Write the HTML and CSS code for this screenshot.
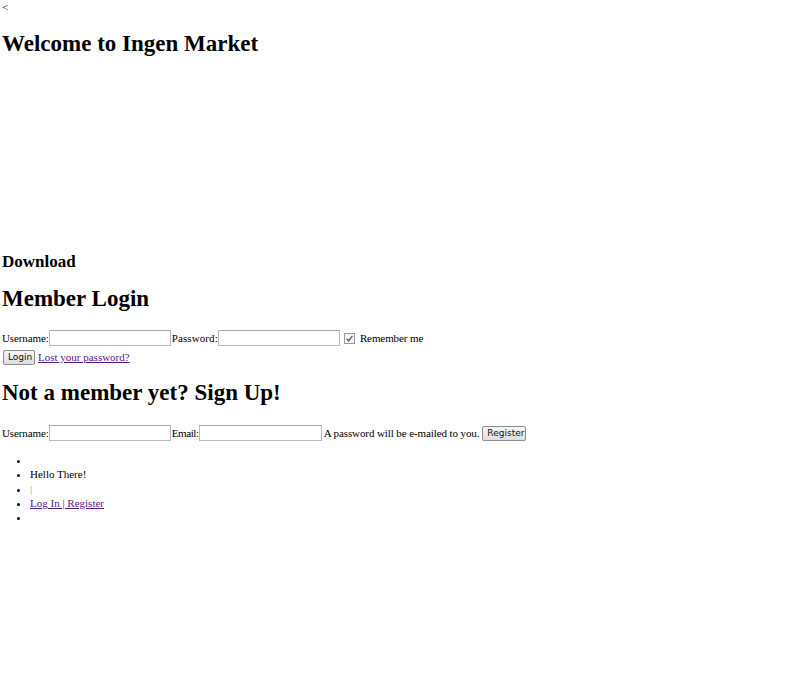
FILE: index.html
```html
<!DOCTYPE html>
<html>
<head>
<meta charset="utf-8">
<title>Ingen Market</title>
<link rel="stylesheet" href="styles.css">
</head>
<body>
<div class="back">&lt;</div>
<h1 class="title">Welcome to Ingen Market</h1>
<div class="banner"></div>
<h3 class="download">Download</h3>
<h2 class="section">Member Login</h2>
<form class="login">
  <div class="row row-first">
    <label class="lbl">Username:</label><input class="field" type="text"><label class="lbl lbl-pass">Password:</label><input class="field" type="password"><span class="check"><svg width="11" height="11" viewBox="0 0 11 11"><rect x="0.5" y="0.5" width="10" height="10" fill="#f4f4f4" stroke="#9a9a9a"/><path d="M2.6 5.6 L4.6 7.8 L8.4 2.8" fill="none" stroke="#4a5f86" stroke-width="1.4"/></svg></span><span class="lbl">Remember me</span>
  </div>
  <div class="row row-second">
    <button class="btn btn-login" type="button">Login</button><a class="link" href="#">Lost your password?</a>
  </div>
</form>
<h2 class="section section-signup">Not a member yet? Sign Up!</h2>
<form class="signup">
  <div class="row row-signup">
    <label class="lbl">Username:</label><input class="field" type="text"><label class="lbl lbl-email">Email:</label><input class="field field-email" type="text"><span class="lbl note">A password will be e-mailed to you.</span><button class="btn btn-register" type="button">Register</button>
  </div>
</form>
<ul class="menu">
  <li></li>
  <li>Hello There!</li>
  <li><span class="sep">|</span></li>
  <li><a class="link" href="#">Log In | Register</a></li>
  <li></li>
</ul>
</body>
</html>
```
FILE: styles.css
```css
html, body {
  background: #fff;
}
body {
  margin: 0;
  padding: 0 0 0 2px;
  font-family: "Liberation Serif", "Times New Roman", serif;
  font-size: 11px;
  line-height: 14px;
  color: #000;
}
.back {
  height: 14px;
  line-height: 14px;
}
.title {
  font-size: 23px;
  line-height: 30px;
  font-weight: bold;
  margin: 15px 0 14px;
}
.banner {
  height: 165px;
}
.download {
  font-size: 17px;
  line-height: 20px;
  font-weight: bold;
  margin: 14px 0 12px;
}
.section {
  font-size: 23px;
  line-height: 30px;
  font-weight: bold;
  margin: 12px 0 15px;
}
.section-signup {
  margin: 13px 0 16px;
}
.login, .signup {
  margin: 0;
}
.row {
  display: flex;
  align-items: center;
  white-space: nowrap;
}
.row-first {
  height: 18px;
}
.row-second {
  height: 16px;
  margin-top: 2px;
}
.row-signup {
  height: 18px;
}
.lbl {
  font-size: 11px;
  letter-spacing: -0.1px;
}
.lbl-pass {
  letter-spacing: 0.1px;
}
.lbl-email {
  letter-spacing: -0.4px;
}
.field {
  box-sizing: border-box;
  width: 122px;
  height: 16px;
  margin: 0 1px 0 0;
  padding: 0 2px;
  border: 1px solid #b9b9b9;
  border-top-color: #a8a8a8;
  background: #fff;
  font: 11px "Liberation Serif", serif;
  outline: none;
}
.field-email {
  width: 123px;
}
.check {
  display: inline-flex;
  margin: 0 5px 0 3px;
}
.btn {
  box-sizing: border-box;
  height: 15px;
  padding: 0 4px;
  border: 1px solid #8c8c8c;
  border-radius: 2px;
  background: linear-gradient(#f6f6f6, #dedede);
  font-family: "DejaVu Sans", "Liberation Sans", sans-serif;
  font-size: 9px;
  line-height: 13px;
  color: #111;
}
.btn-login {
  width: 32px;
  margin: 0 3px 0 1px;
}
.btn-register {
  width: 44px;
  margin-left: 3px;
}
.link {
  color: #551a8b;
  text-decoration: underline;
}
.note {
  margin-left: 1px;
}
.menu {
  margin: 11px 0;
  padding-left: 28px;
  list-style: disc;
}
.menu li {
  height: 14.3px;
  line-height: 14.3px;
}
.sep {
  color: #a89f8a;
}
```
